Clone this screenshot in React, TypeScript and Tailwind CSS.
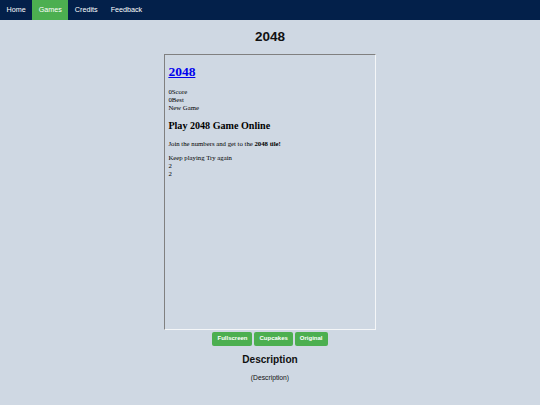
import React from 'react';

const navItems = ['Home', 'Games', 'Credits', 'Feedback'];

const GameFrame: React.FC = () => {
  return (
    <div className="w-[212px] h-[276px] border border-t-[#808080] border-l-[#808080] border-b-[#f4f6f8] border-r-[#f4f6f8] text-left text-black overflow-hidden" style={{ fontFamily: '"Liberation Serif", serif' }}>
      <div className="px-[3.4px] text-[6.75px] leading-[1.15]">
        <h1 className="text-[13.5px] font-bold leading-[1.15] my-[9px]">
          <a href="#" className="text-[#0000ee] underline">2048</a>
        </h1>
        <div>
          <div>0Score</div>
          <div>0Best</div>
          <div>New Game</div>
        </div>
        <h2 className="text-[10.1px] font-bold leading-[1.15] my-[8.4px]">Play 2048 Game Online</h2>
        <p className="my-[6.75px]">
          Join the numbers and get to the <strong>2048 tile!</strong>
        </p>
        <div>
          <div>Keep playing Try again</div>
          <div>2</div>
          <div>2</div>
        </div>
      </div>
    </div>
  );
};

export default function App() {
  return (
    <div className="min-h-[405px] bg-[#cfd8e3] text-[#111]" style={{ fontFamily: '"Liberation Sans", Arial, sans-serif' }}>
      <nav className="h-[20px] bg-[#03204a] flex items-stretch">
        {navItems.map((item) => (
          <a
            key={item}
            href="#"
            className={
              item === 'Games'
                ? 'flex items-center px-[6.5px] text-[7.2px] text-white bg-[#4caf50]'
                : 'flex items-center px-[6.5px] text-[7.2px] text-white'
            }
          >
            {item}
          </a>
        ))}
      </nav>
      <main className="flex flex-col items-center">
        <h1 className="text-[13.5px] font-bold leading-[1.15] mt-[9px] mb-[9px]">2048</h1>
        <GameFrame />
        <div className="flex gap-[2px] mt-[2px]">
          <button className="h-[14px] px-[5px] bg-[#4caf50] text-white text-[6px] font-bold rounded-[2px]">Fullscreen</button>
          <button className="h-[14px] px-[5px] bg-[#4caf50] text-white text-[6px] font-bold rounded-[2px]">Cupcakes</button>
          <button className="h-[14px] px-[5px] bg-[#4caf50] text-white text-[6px] font-bold rounded-[2px]">Original</button>
        </div>
        <h2 className="text-[10.1px] font-bold leading-[1.15] mt-[8.5px] mb-[8.4px]">Description</h2>
        <p className="text-[6.75px] leading-[1.15]">(Description)</p>
      </main>
    </div>
  );
}
